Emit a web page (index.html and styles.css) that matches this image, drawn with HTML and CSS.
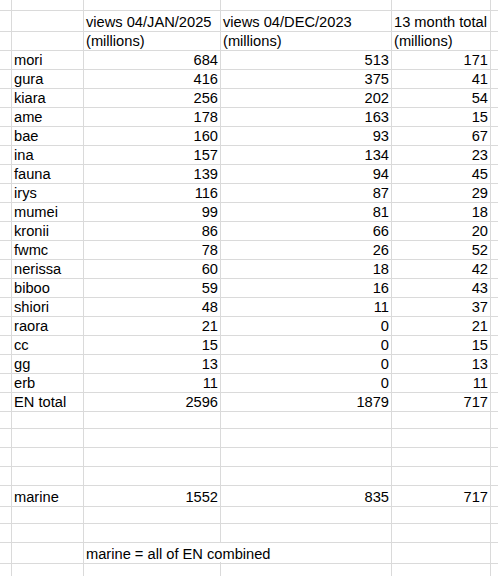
FILE: index.html
```html
<!DOCTYPE html>
<html>
<head>
<meta charset="utf-8">
<link rel="stylesheet" href="styles.css">
</head>
<body>
<div class="sheet">
  <div class="row top"><div class="c"></div><div class="c"></div><div class="c"></div><div class="c"></div><div class="c"></div><div class="c f"></div></div>
  <div class="row"><div class="c"></div><div class="c"></div><div class="c">views 04/JAN/2025</div><div class="c">views 04/DEC/2023</div><div class="c">13 month total</div><div class="c f"></div></div>
  <div class="row"><div class="c"></div><div class="c"></div><div class="c">(millions)</div><div class="c">(millions)</div><div class="c">(millions)</div><div class="c f"></div></div>
  <div class="row"><div class="c"></div><div class="c">mori</div><div class="c n">684</div><div class="c n">513</div><div class="c n">171</div><div class="c f"></div></div>
  <div class="row"><div class="c"></div><div class="c">gura</div><div class="c n">416</div><div class="c n">375</div><div class="c n">41</div><div class="c f"></div></div>
  <div class="row"><div class="c"></div><div class="c">kiara</div><div class="c n">256</div><div class="c n">202</div><div class="c n">54</div><div class="c f"></div></div>
  <div class="row"><div class="c"></div><div class="c">ame</div><div class="c n">178</div><div class="c n">163</div><div class="c n">15</div><div class="c f"></div></div>
  <div class="row"><div class="c"></div><div class="c">bae</div><div class="c n">160</div><div class="c n">93</div><div class="c n">67</div><div class="c f"></div></div>
  <div class="row"><div class="c"></div><div class="c">ina</div><div class="c n">157</div><div class="c n">134</div><div class="c n">23</div><div class="c f"></div></div>
  <div class="row"><div class="c"></div><div class="c">fauna</div><div class="c n">139</div><div class="c n">94</div><div class="c n">45</div><div class="c f"></div></div>
  <div class="row"><div class="c"></div><div class="c">irys</div><div class="c n">116</div><div class="c n">87</div><div class="c n">29</div><div class="c f"></div></div>
  <div class="row"><div class="c"></div><div class="c">mumei</div><div class="c n">99</div><div class="c n">81</div><div class="c n">18</div><div class="c f"></div></div>
  <div class="row"><div class="c"></div><div class="c">kronii</div><div class="c n">86</div><div class="c n">66</div><div class="c n">20</div><div class="c f"></div></div>
  <div class="row"><div class="c"></div><div class="c">fwmc</div><div class="c n">78</div><div class="c n">26</div><div class="c n">52</div><div class="c f"></div></div>
  <div class="row"><div class="c"></div><div class="c">nerissa</div><div class="c n">60</div><div class="c n">18</div><div class="c n">42</div><div class="c f"></div></div>
  <div class="row"><div class="c"></div><div class="c">biboo</div><div class="c n">59</div><div class="c n">16</div><div class="c n">43</div><div class="c f"></div></div>
  <div class="row"><div class="c"></div><div class="c">shiori</div><div class="c n">48</div><div class="c n">11</div><div class="c n">37</div><div class="c f"></div></div>
  <div class="row"><div class="c"></div><div class="c">raora</div><div class="c n">21</div><div class="c n">0</div><div class="c n">21</div><div class="c f"></div></div>
  <div class="row"><div class="c"></div><div class="c">cc</div><div class="c n">15</div><div class="c n">0</div><div class="c n">15</div><div class="c f"></div></div>
  <div class="row"><div class="c"></div><div class="c">gg</div><div class="c n">13</div><div class="c n">0</div><div class="c n">13</div><div class="c f"></div></div>
  <div class="row"><div class="c"></div><div class="c">erb</div><div class="c n">11</div><div class="c n">0</div><div class="c n">11</div><div class="c f"></div></div>
  <div class="row"><div class="c"></div><div class="c">EN total</div><div class="c n">2596</div><div class="c n">1879</div><div class="c n">717</div><div class="c f"></div></div>
  <div class="row"><div class="c"></div><div class="c"></div><div class="c"></div><div class="c"></div><div class="c"></div><div class="c f"></div></div>
  <div class="row"><div class="c"></div><div class="c"></div><div class="c"></div><div class="c"></div><div class="c"></div><div class="c f"></div></div>
  <div class="row"><div class="c"></div><div class="c"></div><div class="c"></div><div class="c"></div><div class="c"></div><div class="c f"></div></div>
  <div class="row"><div class="c"></div><div class="c"></div><div class="c"></div><div class="c"></div><div class="c"></div><div class="c f"></div></div>
  <div class="row"><div class="c"></div><div class="c">marine</div><div class="c n">1552</div><div class="c n">835</div><div class="c n">717</div><div class="c f"></div></div>
  <div class="row"><div class="c"></div><div class="c"></div><div class="c"></div><div class="c"></div><div class="c"></div><div class="c f"></div></div>
  <div class="row"><div class="c"></div><div class="c"></div><div class="c"></div><div class="c"></div><div class="c"></div><div class="c f"></div></div>
  <div class="row"><div class="c"></div><div class="c"></div><div class="c span2">marine = all of EN combined</div><div class="c"></div><div class="c f"></div></div>
  <div class="row"><div class="c"></div><div class="c"></div><div class="c"></div><div class="c"></div><div class="c"></div><div class="c f"></div></div>
</div>
</body>
</html>
```

FILE: styles.css
```css
html, body {
  margin: 0;
  padding: 0;
  background: #ffffff;
}

.sheet {
  width: 498px;
  height: 576px;
  overflow: hidden;
  font-family: "Liberation Sans", Arial, sans-serif;
  font-size: 14.67px;
  color: #000000;
}

.row {
  display: grid;
  grid-template-columns: 12px 72px 137px 171px 99px 1fr;
  height: 19px;
}

.row.top {
  height: 11px;
}

.c {
  box-sizing: border-box;
  border-right: 1px solid #dadada;
  border-bottom: 1px solid #dadada;
  padding: 2px 2px 0 2px;
  line-height: 18px;
  white-space: nowrap;
  overflow: visible;
}

.c.n {
  text-align: right;
}

.c.f {
  border-right: none;
}

.c.span2 {
  grid-column: span 2;
}
```
